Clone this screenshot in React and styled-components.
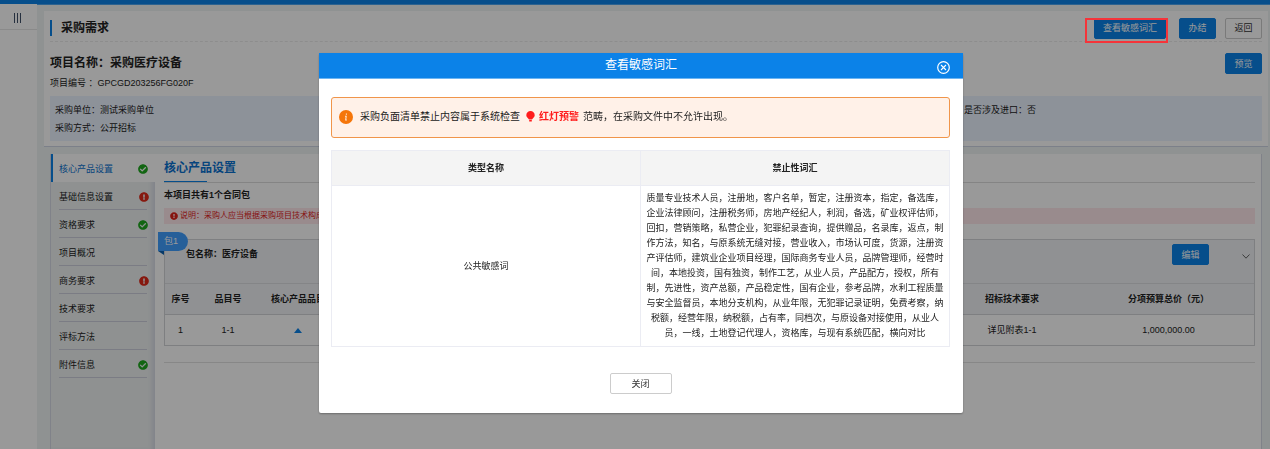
// src/App.jsx

import styled, { createGlobalStyle } from "styled-components";
import { FaCheckCircle, FaExclamationCircle } from "react-icons/fa";

/* ======================
      Global
======================= */

const GlobalStyle = createGlobalStyle`
  * {
    box-sizing: border-box;
  }

  body {
    margin: 0;
    background: #fff;
    color: #222;
    font-family: "Liberation Sans", "Noto Sans CJK SC", sans-serif;
    font-size: 9px;
    line-height: 18px;
  }

  h1, h2, h3, p, ul, dl, dd {
    margin: 0;
    padding: 0;
  }

  button {
    font-family: inherit;
    cursor: pointer;
  }
`;

/* ======================
      Page frame
======================= */

const Page = styled.div`
  min-height: 100vh;
  display: flex;
  flex-direction: column;
`;

const TopBar = styled.header`
  height: 4px;
  background: #0b82e8;
`;

const Body = styled.div`
  flex: 1;
  display: flex;
`;

const SideBar = styled.aside`
  width: 37px;
  flex-shrink: 0;
  background: #fff;
`;

const MenuButton = styled.button`
  width: 100%;
  height: 26px;
  display: flex;
  align-items: center;
  justify-content: center;
  padding: 2px 3px 0 0;
  border: 0;
  border-bottom: 1px solid #e6e6e6;
  background: none;
  color: #40506a;
`;

const Main = styled.main`
  flex: 1;
  min-width: 0;
  display: flex;
  flex-direction: column;
  gap: 7px;
  padding: 6px 2px 0 7px;
  background: #eef3f4;
  border-top: 1px solid #4aa3ee;
`;

/* ======================
      Project card
======================= */

const Card = styled.section`
  padding: 0 6px 5px;
  background: #fff;
  border-bottom: 1px solid #cfd6e4;
`;

const CardHead = styled.div`
  height: 31px;
  display: flex;
  align-items: center;
  justify-content: space-between;
  padding-top: 4px;
  border-bottom: 1px dashed #ececec;
`;

const PageTitle = styled.h1`
  padding: 1px 0 0 9px;
  border-left: 2px solid #0b82e8;
  font-size: 12px;
  line-height: 15px;
`;

const Actions = styled.div`
  display: flex;
  gap: 9px;
`;

const Button = styled.button`
  height: 21px;
  min-width: ${({ $wide }) => ($wide ? "62px" : "37px")};
  padding: 0 8px;
  border: 1px solid ${({ $plain }) => ($plain ? "#ccc" : "#0b82e8")};
  border-radius: 2px;
  background: ${({ $plain }) => ($plain ? "#fff" : "#0b82e8")};
  color: ${({ $plain }) => ($plain ? "#333" : "#fff")};
  font-size: 9px;
  line-height: 18px;
`;

// 红框标注，需浮在遮罩之上
const Marked = styled.div`
  position: relative;
  display: flex;
  margin-right: 4px;

  &::after {
    content: "";
    position: absolute;
    z-index: 20;
    inset: 0 -2px -4px -9px;
    border: 2px solid #f5343a;
    pointer-events: none;
  }
`;

const ProjectRow = styled.div`
  display: flex;
  justify-content: space-between;
  align-items: flex-start;
  padding: 11px 0 3px;
`;

const ProjectName = styled.h2`
  font-size: 12px;
  line-height: 20px;
`;

const ProjectNo = styled.p`
  line-height: 20px;
`;

const InfoBox = styled.dl`
  display: grid;
  grid-template-columns: repeat(4, 1fr);
  padding: 5px 0 4px;
  background: #ebf3ff;
`;

const InfoItem = styled.div`
  display: flex;
  grid-column: ${({ $col }) => $col};
  padding-left: 5px;
`;

/* ======================
      Content
======================= */

const Panel = styled.div`
  flex: 1;
  display: flex;
  margin: 0 6px;
  border: 1px solid #d5d9e4;
  border-width: 0 1px;
  background: #fff;
`;

const Nav = styled.nav`
  width: 104px;
  flex-shrink: 0;
  background: #eef2f2;
  box-shadow: inset -5px 0 4px -2px #d9dbe6;
`;

const NavLink = styled.a`
  height: 28px;
  display: flex;
  padding: 0 8px;
  border-left: ${({ $active }) => ($active ? "2px solid #0b82e8" : "0")};
  padding-left: ${({ $active }) => ($active ? "6px" : "8px")};
  background: ${({ $active }) => ($active ? "#fff" : "none")};
  color: ${({ $active }) => ($active ? "#0b72d0" : "#222")};
  text-decoration: none;

  span {
    flex: 1;
    display: flex;
    align-items: center;
    justify-content: space-between;
    padding-top: 2px;
    border-bottom: 1px solid ${({ $active }) => ($active ? "transparent" : "#cdcfdc")};
  }

  svg {
    margin-right: ${({ $ok }) => ($ok ? "-1px" : "-2px")};
    font-size: 10px;
    color: ${({ $ok }) => ($ok ? "#1fa81f" : "#e02a1a")};
  }
`;

const Content = styled.section`
  flex: 1;
  min-width: 0;
  padding: 0 6px 0 9px;
`;

const ContentTitle = styled.h2`
  border-bottom: 1px solid #ddd;
  color: #0b72d0;
  font-size: 12px;
  line-height: 28px;

  &::after {
    content: "";
    display: block;
    width: 43px;
    height: 1px;
    margin-top: -1px;
    background: #0b82e8;
  }
`;

const PackCount = styled.h3`
  font-size: 9px;
  line-height: 25px;
`;

const Note = styled.p`
  display: flex;
  align-items: center;
  gap: 2px;
  padding-left: 6px;
  background: #ffe8ec;
  color: #e0201a;
  font-size: 8px;
  line-height: 16px;
`;

const Pack = styled.div`
  position: relative;
  margin-top: 15px;
  border: 1px solid #d2d4d8;
`;

const PackTag = styled.div`
  position: absolute;
  top: -8px;
  left: -7px;
  width: 30px;
  height: 19px;
  padding-left: 6px;
  border-radius: 0 10px 10px 0;
  background: #409eff;
  color: #fff;
  line-height: 19px;

  &::after {
    content: "";
    position: absolute;
    top: 19px;
    left: 0;
    border-top: 4px solid #0b5fae;
    border-left: 6px solid transparent;
  }
`;

const PackHead = styled.div`
  height: 43px;
  display: flex;
  align-items: flex-start;
  padding: 4px 4px 0 21px;
  background: #f0f2f5;
  font-weight: 700;
  line-height: 21px;
`;

const PackName = styled.span`
  flex: 1;
`;

const Toggle = styled.button`
  width: 8px;
  height: 21px;
  margin-left: 33px;
  padding: 0;
  border: 0;
  background: none;
  color: #666;
`;

const ItemTable = styled.table`
  width: 100%;
  border-collapse: collapse;
  table-layout: fixed;
  text-align: center;
  white-space: nowrap;

  th {
    height: 31px;
    padding: 0;
    border-top: 1px solid #dcdee2;
    border-bottom: 1px solid #d2d4d8;
    background: #f0f2f5;
  }

  td {
    height: 30px;
    padding: 0;
  }
`;

const Divider = styled.hr`
  margin: 16px 0 0;
  border: 0;
  border-top: 1px solid #e2e2e2;
`;

/* ======================
      Dialog
======================= */

const Overlay = styled.div`
  position: fixed;
  inset: 0;
  z-index: 10;
  display: flex;
  align-items: flex-start;
  justify-content: center;
  padding: 53px 0 0 12px;
  background: rgba(0, 0, 0, 0.4);
`;

const Dialog = styled.div`
  width: 644px;
  border-radius: 2px;
  background: #fff;
  box-shadow: 0 1px 2px rgba(0, 0, 0, 0.3);
`;

const DialogHead = styled.div`
  display: flex;
  align-items: center;
  padding: 0 13px;
  border-bottom: 1px solid #6db5f2;
  background: #0b82e8;
  color: #fff;
`;

const DialogTitle = styled.h2`
  flex: 1;
  padding-left: 13px;
  font-size: 12px;
  font-weight: 400;
  line-height: 25px;
  text-align: center;
`;

const CloseIcon = styled.button`
  display: flex;
  padding: 3px 0 0;
  border: 0;
  background: none;
  color: #fff;
`;

const DialogBody = styled.div`
  display: flex;
  flex-direction: column;
  align-items: center;
  padding: 18px 13px 19px 12px;
`;

const Warning = styled.p`
  width: 100%;
  height: 41px;
  display: flex;
  align-items: center;
  padding: 0 7px 2px;
  border: 1px solid #f0954a;
  border-radius: 3px;
  background: #fff1e8;
  font-size: 10px;

  > svg {
    margin-right: 7px;
  }

  strong {
    display: flex;
    align-items: center;
    gap: 4px;
    margin: 0 4px 0 6px;
    color: #ff1c1c;
  }
`;

const WordTable = styled.table`
  width: 100%;
  margin: 12px 0 26px;
  border-collapse: collapse;
  table-layout: fixed;
  text-align: center;
  line-height: 15px;

  th,
  td {
    padding: 5px 4px;
    border: 1px solid #ebecf3;
  }

  th {
    height: 35px;
    background: #f4f4f4;
  }
`;

/* ======================
      Data
======================= */

const navItems = [
  { name: "核心产品设置", status: "ok", active: true },
  { name: "基础信息设置", status: "error" },
  { name: "资格要求", status: "ok" },
  { name: "项目概况" },
  { name: "商务要求", status: "error" },
  { name: "技术要求" },
  { name: "评标方法" },
  { name: "附件信息", status: "ok" },
];

const infos = [
  { label: "采购单位：", value: "测试采购单位", col: 1 },
  { label: "是否涉及进口：", value: "否", col: 4 },
  { label: "采购方式：", value: "公开招标", col: 1 },
];

const words =
  "质量专业技术人员，注册地，客户名单，暂定，注册资本，指定，备选库，" +
  "企业法律顾问，注册税务师，房地产经纪人，利润，备选，矿业权评估师，" +
  "回扣，营销策略，私营企业，犯罪纪录查询，提供赠品，名录库，返点，制" +
  "作方法，知名，与原系统无缝对接，营业收入，市场认可度，货源，注册资" +
  "产评估师，建筑业企业项目经理，国际商务专业人员，品牌管理师，经营时" +
  "间，本地投资，国有独资，制作工艺，从业人员，产品配方，授权，所有" +
  "制，先进性，资产总额，产品稳定性，国有企业，参考品牌，水利工程质量" +
  "与安全监督员，本地分支机构，从业年限，无犯罪记录证明，免费考察，纳" +
  "税额，经营年限，纳税额，占有率，同档次，与原设备对接使用，从业人" +
  "员，一线，土地登记代理人，资格库，与现有系统匹配，横向对比";

/* ======================
      Dialog component
======================= */

function SensitiveWordDialog() {
  return (
    <Overlay>
      <Dialog role="dialog" aria-modal="true" aria-labelledby="dialog-title">
        <DialogHead>
          <DialogTitle id="dialog-title">查看敏感词汇</DialogTitle>
          <CloseIcon type="button" aria-label="关闭">
            <svg width="13" height="13" viewBox="0 0 13 13" fill="none" stroke="currentColor">
              <circle cx="6.5" cy="6.5" r="5.8" strokeWidth="1.2" />
              <path d="M4 4l5 5M9 4l-5 5" strokeWidth="1.1" />
            </svg>
          </CloseIcon>
        </DialogHead>

        <DialogBody>
          <Warning>
            <svg width="14" height="14" viewBox="0 0 14 14">
              <circle cx="7" cy="7" r="7" fill="#f5760a" />
              <path
                d="M7.400 3.500v1.200M6 6.300h1.200L6.700 10h1.200"
                fill="none"
                stroke="#ffe6d0"
                strokeWidth="1.1"
              />
            </svg>
            采购负面清单禁止内容属于系统检查
            <strong>
              <svg width="9" height="11" viewBox="0 0 9 11" fill="currentColor">
                <path d="M4.5 0a4.200 4.200 0 0 1 4.200 4.200c0 1.500-1 2.400-1.900 3.300L6 8.500H3l-.8-1C1.300 6.600.3 5.700.3 4.200A4.200 4.200 0 0 1 4.500 0z" />
                <path d="M3.200 9h2.600v1.500H3.200z" />
              </svg>
              红灯预警
            </strong>
            范畴，在采购文件中不允许出现。
          </Warning>

          <WordTable>
            <thead>
              <tr>
                <th>类型名称</th>
                <th>禁止性词汇</th>
              </tr>
            </thead>
            <tbody>
              <tr>
                <td>公共敏感词</td>
                <td>{words}</td>
              </tr>
            </tbody>
          </WordTable>

          <Button type="button" $plain $wide>关闭</Button>
        </DialogBody>
      </Dialog>
    </Overlay>
  );
}

export default function App() {
  return (
    <>
      <GlobalStyle />

      <Page>
        <TopBar />

        <Body>
          <SideBar>
            <MenuButton type="button" aria-label="菜单">
              <svg width="9" height="10" viewBox="0 0 9 10" stroke="currentColor">
                <path d="M1.500 0v10M4.500 0v10M7.500 0v10" />
              </svg>
            </MenuButton>
          </SideBar>

          <Main>
            <Card>
              <CardHead>
                <PageTitle>采购需求</PageTitle>
                <Actions>
                  <Marked>
                    <Button type="button">查看敏感词汇</Button>
                  </Marked>
                  <Button type="button">办结</Button>
                  <Button type="button" $plain>返回</Button>
                </Actions>
              </CardHead>

              <ProjectRow>
                <div>
                  <ProjectName>项目名称：采购医疗设备</ProjectName>
                  <ProjectNo>项目编号 ：GPCGD203256FG020F</ProjectNo>
                </div>
                <Button type="button">预览</Button>
              </ProjectRow>

              <InfoBox>
                {infos.map((info) => (
                  <InfoItem key={info.label} $col={info.col}>
                    <dt>{info.label}</dt>
                    <dd>{info.value}</dd>
                  </InfoItem>
                ))}
              </InfoBox>
            </Card>

            <Panel>
              <Nav>
                {navItems.map((item) => (
                  <NavLink
                    key={item.name}
                    href="#"
                    $active={item.active}
                    $ok={item.status === "ok"}
                  >
                    <span>
                      {item.name}
                      {item.status === "ok" && <FaCheckCircle />}
                      {item.status === "error" && <FaExclamationCircle />}
                    </span>
                  </NavLink>
                ))}
              </Nav>

              <Content>
                <ContentTitle>核心产品设置</ContentTitle>
                <PackCount>本项目共有1个合同包</PackCount>
                <Note>
                  <FaExclamationCircle />
                  说明：采购人应当根据采购项目技术构成
                </Note>

                <Pack>
                  <PackTag>包1</PackTag>
                  <PackHead>
                    <PackName>包名称：医疗设备</PackName>
                    <Button type="button">编辑</Button>
                    <Toggle type="button" aria-label="收起">
                      <svg width="8" height="5" viewBox="0 0 8 5" fill="none" stroke="currentColor">
                        <path d="M.5.5L4 4.200 7.500.5" />
                      </svg>
                    </Toggle>
                  </PackHead>

                  <ItemTable>
                    <colgroup>
                      <col width="31" />
                      <col width="64" />
                      <col width="76" />
                      <col />
                      <col width="142" />
                      <col width="171" />
                    </colgroup>
                    <thead>
                      <tr>
                        <th>序号</th>
                        <th>品目号</th>
                        <th>核心产品品目</th>
                        <th />
                        <th>招标技术要求</th>
                        <th>分项预算总价（元）</th>
                      </tr>
                    </thead>
                    <tbody>
                      <tr>
                        <td>1</td>
                        <td>1-1</td>
                        <td>
                          <svg width="8" height="5" viewBox="0 0 8 5" fill="#0b82e8">
                            <path d="M4 0l4 5H0z" />
                          </svg>
                        </td>
                        <td />
                        <td>详见附表1-1</td>
                        <td>1,000,000.00</td>
                      </tr>
                    </tbody>
                  </ItemTable>
                </Pack>

                <Divider />
              </Content>
            </Panel>
          </Main>
        </Body>
      </Page>

      <SensitiveWordDialog />
    </>
  );
}
